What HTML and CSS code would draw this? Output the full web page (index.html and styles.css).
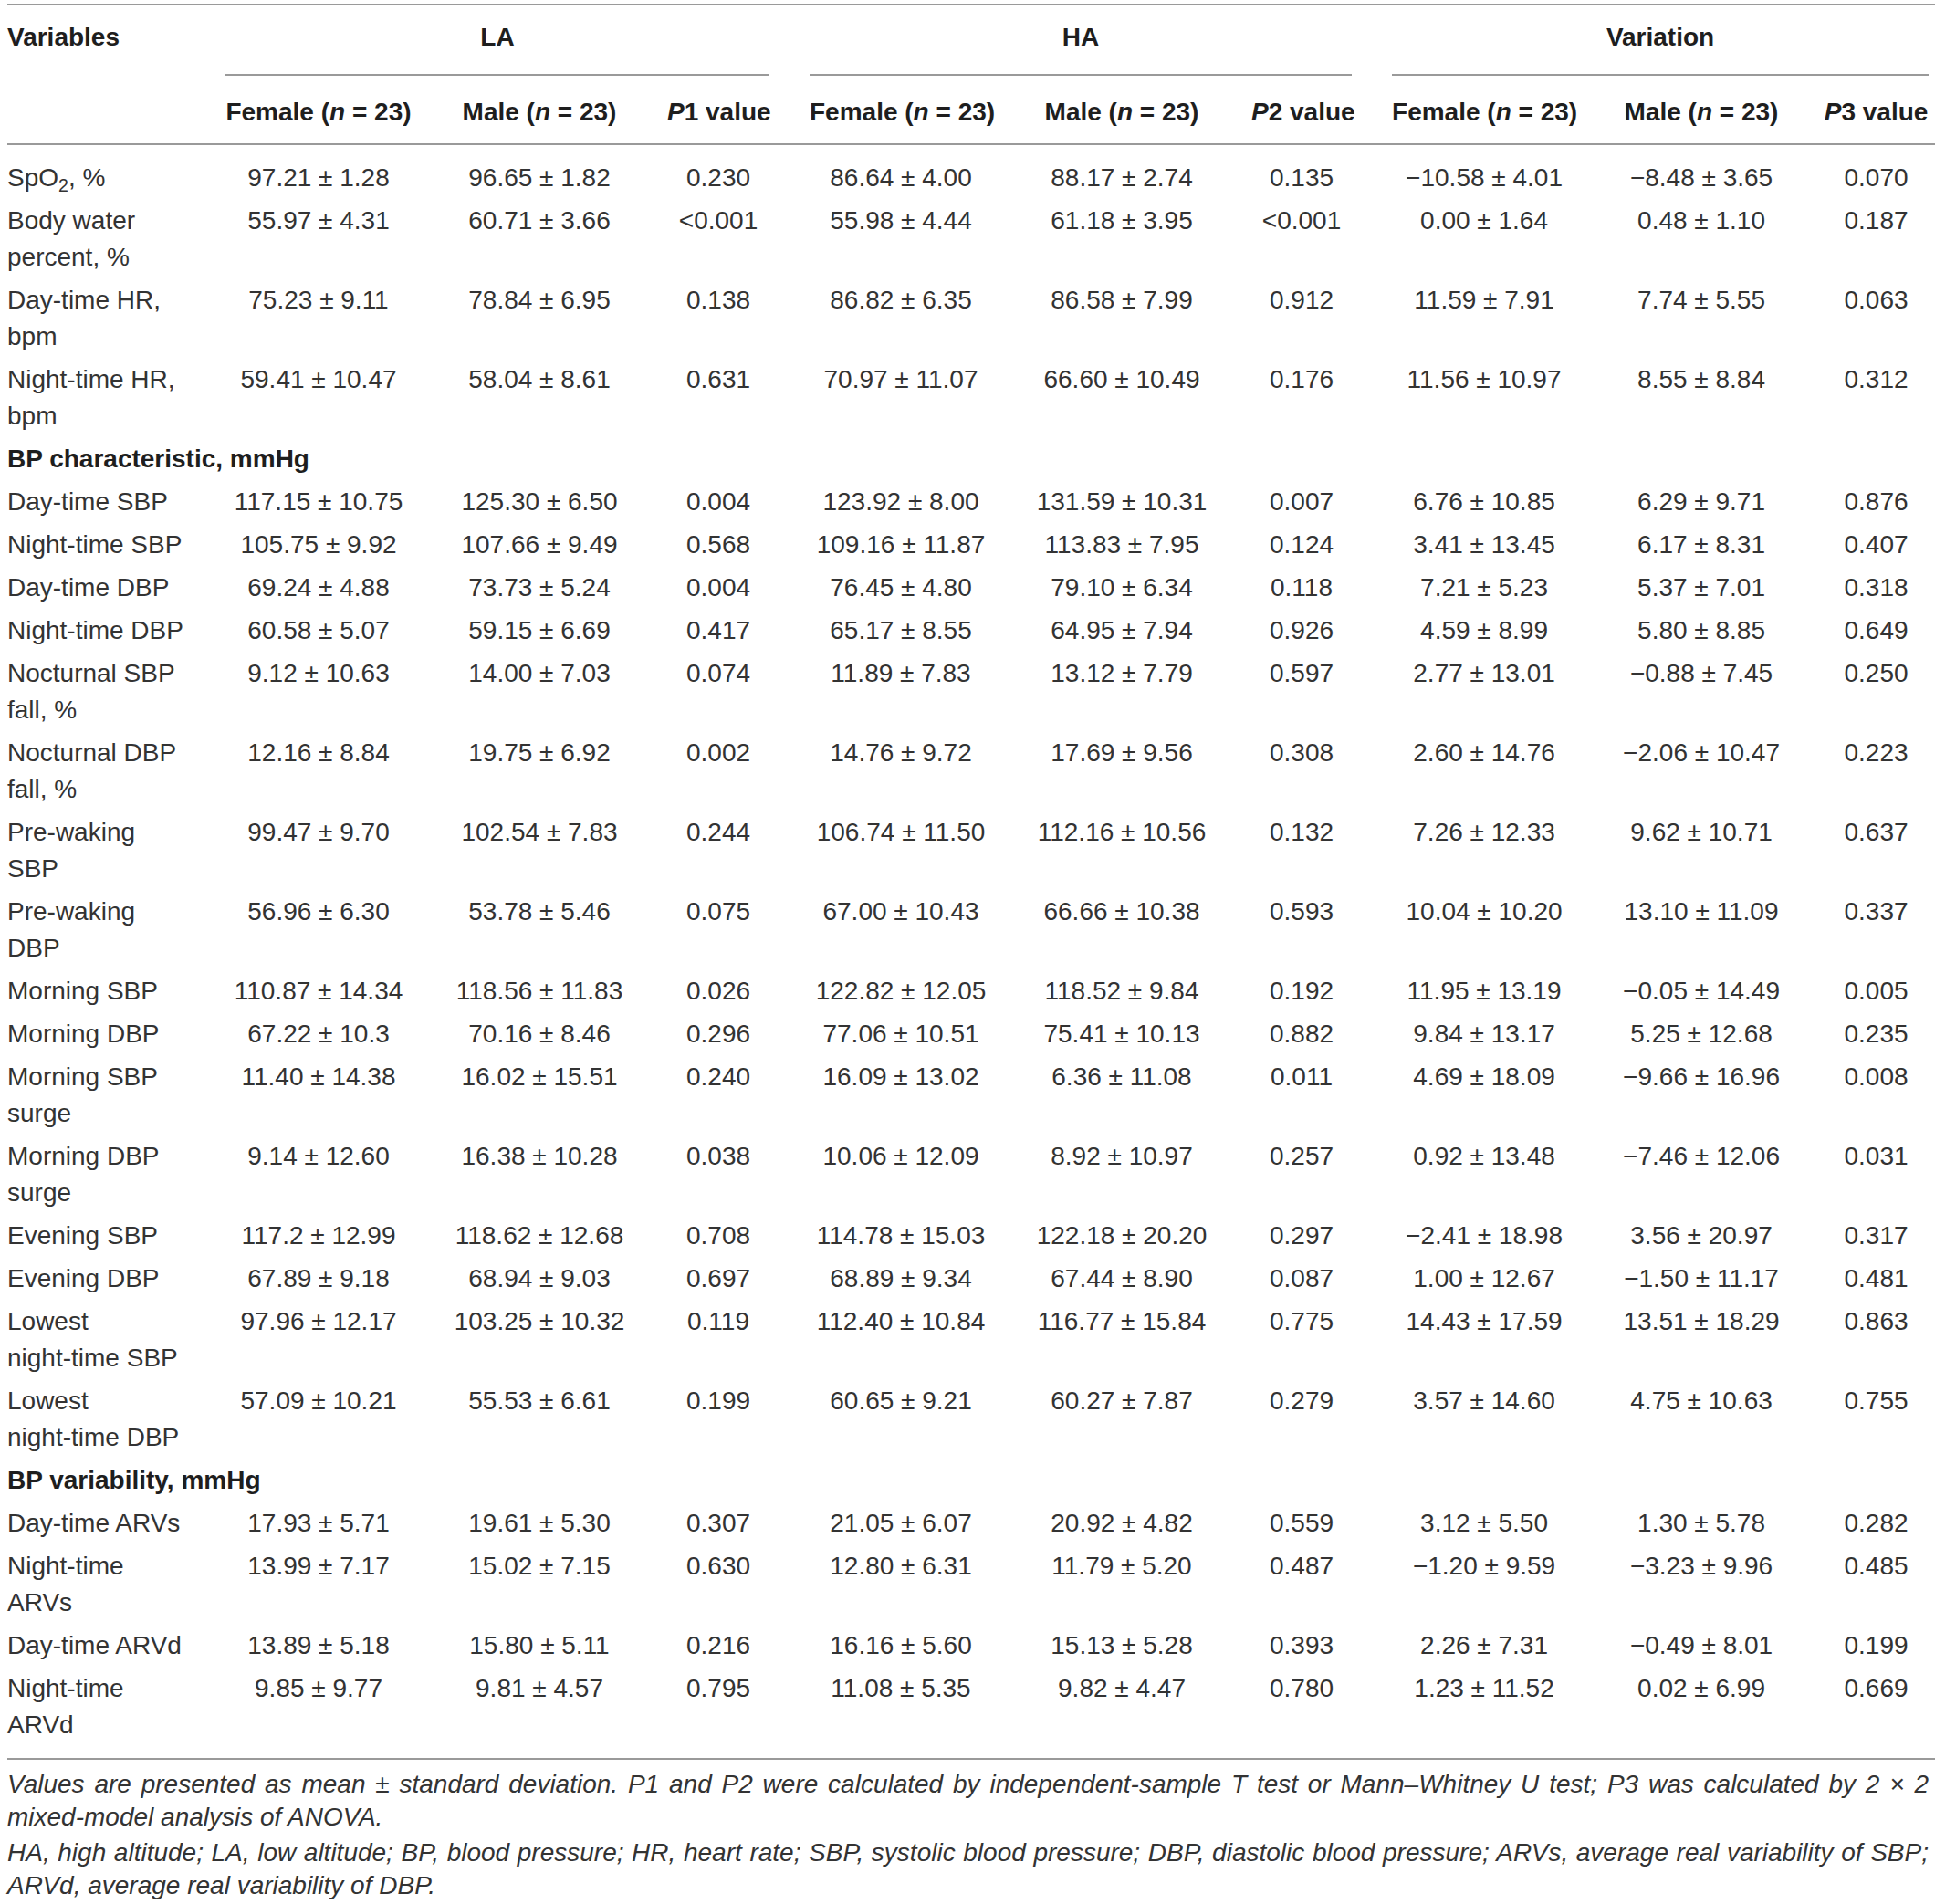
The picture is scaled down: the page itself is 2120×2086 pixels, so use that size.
FILE: index.html
```html
<!DOCTYPE html>
<html lang="en">
<head>
  <meta charset="UTF-8" />
  <title>BP characteristics by sex at LA and HA</title>
  <link rel="stylesheet" href="styles.css">
</head>
<body>

<table class="data">
  <colgroup>
    <col class="c-var">
    <col class="c-f1"><col class="c-m1"><col class="c-p1">
    <col class="c-f2"><col class="c-m2"><col class="c-p2">
    <col class="c-f3"><col class="c-m3"><col class="c-p3">
  </colgroup>
  <thead>
    <tr class="head-top">
      <th rowspan="2" class="var-head">Variables</th>
      <th colspan="3" class="group"><div>LA</div></th>
      <th colspan="3" class="group"><div>HA</div></th>
      <th colspan="3" class="group group-last"><div>Variation</div></th>
    </tr>
    <tr class="head-sub">
      <th>Female (<i>n</i> = 23)</th>
      <th>Male (<i>n</i> = 23)</th>
      <th><i>P</i>1 value</th>
      <th>Female (<i>n</i> = 23)</th>
      <th>Male (<i>n</i> = 23)</th>
      <th><i>P</i>2 value</th>
      <th>Female (<i>n</i> = 23)</th>
      <th>Male (<i>n</i> = 23)</th>
      <th class="last"><i>P</i>3 value</th>
    </tr>
  </thead>
  <tbody>
    <tr><td>SpO<sub>2</sub>, %</td><td>97.21 ± 1.28</td><td>96.65 ± 1.82</td><td>0.230</td><td>86.64 ± 4.00</td><td>88.17 ± 2.74</td><td>0.135</td><td>−10.58 ± 4.01</td><td>−8.48 ± 3.65</td><td>0.070</td></tr>
    <tr><td>Body water percent, %</td><td>55.97 ± 4.31</td><td>60.71 ± 3.66</td><td>&lt;0.001</td><td>55.98 ± 4.44</td><td>61.18 ± 3.95</td><td>&lt;0.001</td><td>0.00 ± 1.64</td><td>0.48 ± 1.10</td><td>0.187</td></tr>
    <tr><td>Day-time HR, bpm</td><td>75.23 ± 9.11</td><td>78.84 ± 6.95</td><td>0.138</td><td>86.82 ± 6.35</td><td>86.58 ± 7.99</td><td>0.912</td><td>11.59 ± 7.91</td><td>7.74 ± 5.55</td><td>0.063</td></tr>
    <tr><td>Night-time HR, bpm</td><td>59.41 ± 10.47</td><td>58.04 ± 8.61</td><td>0.631</td><td>70.97 ± 11.07</td><td>66.60 ± 10.49</td><td>0.176</td><td>11.56 ± 10.97</td><td>8.55 ± 8.84</td><td>0.312</td></tr>
    <tr class="section"><td colspan="10">BP characteristic, mmHg</td></tr>
    <tr><td>Day-time SBP</td><td>117.15 ± 10.75</td><td>125.30 ± 6.50</td><td>0.004</td><td>123.92 ± 8.00</td><td>131.59 ± 10.31</td><td>0.007</td><td>6.76 ± 10.85</td><td>6.29 ± 9.71</td><td>0.876</td></tr>
    <tr><td>Night-time SBP</td><td>105.75 ± 9.92</td><td>107.66 ± 9.49</td><td>0.568</td><td>109.16 ± 11.87</td><td>113.83 ± 7.95</td><td>0.124</td><td>3.41 ± 13.45</td><td>6.17 ± 8.31</td><td>0.407</td></tr>
    <tr><td>Day-time DBP</td><td>69.24 ± 4.88</td><td>73.73 ± 5.24</td><td>0.004</td><td>76.45 ± 4.80</td><td>79.10 ± 6.34</td><td>0.118</td><td>7.21 ± 5.23</td><td>5.37 ± 7.01</td><td>0.318</td></tr>
    <tr><td>Night-time DBP</td><td>60.58 ± 5.07</td><td>59.15 ± 6.69</td><td>0.417</td><td>65.17 ± 8.55</td><td>64.95 ± 7.94</td><td>0.926</td><td>4.59 ± 8.99</td><td>5.80 ± 8.85</td><td>0.649</td></tr>
    <tr><td>Nocturnal SBP fall, %</td><td>9.12 ± 10.63</td><td>14.00 ± 7.03</td><td>0.074</td><td>11.89 ± 7.83</td><td>13.12 ± 7.79</td><td>0.597</td><td>2.77 ± 13.01</td><td>−0.88 ± 7.45</td><td>0.250</td></tr>
    <tr><td>Nocturnal DBP fall, %</td><td>12.16 ± 8.84</td><td>19.75 ± 6.92</td><td>0.002</td><td>14.76 ± 9.72</td><td>17.69 ± 9.56</td><td>0.308</td><td>2.60 ± 14.76</td><td>−2.06 ± 10.47</td><td>0.223</td></tr>
    <tr><td>Pre-waking SBP</td><td>99.47 ± 9.70</td><td>102.54 ± 7.83</td><td>0.244</td><td>106.74 ± 11.50</td><td>112.16 ± 10.56</td><td>0.132</td><td>7.26 ± 12.33</td><td>9.62 ± 10.71</td><td>0.637</td></tr>
    <tr><td>Pre-waking DBP</td><td>56.96 ± 6.30</td><td>53.78 ± 5.46</td><td>0.075</td><td>67.00 ± 10.43</td><td>66.66 ± 10.38</td><td>0.593</td><td>10.04 ± 10.20</td><td>13.10 ± 11.09</td><td>0.337</td></tr>
    <tr><td>Morning SBP</td><td>110.87 ± 14.34</td><td>118.56 ± 11.83</td><td>0.026</td><td>122.82 ± 12.05</td><td>118.52 ± 9.84</td><td>0.192</td><td>11.95 ± 13.19</td><td>−0.05 ± 14.49</td><td>0.005</td></tr>
    <tr><td>Morning DBP</td><td>67.22 ± 10.3</td><td>70.16 ± 8.46</td><td>0.296</td><td>77.06 ± 10.51</td><td>75.41 ± 10.13</td><td>0.882</td><td>9.84 ± 13.17</td><td>5.25 ± 12.68</td><td>0.235</td></tr>
    <tr><td>Morning SBP surge</td><td>11.40 ± 14.38</td><td>16.02 ± 15.51</td><td>0.240</td><td>16.09 ± 13.02</td><td>6.36 ± 11.08</td><td>0.011</td><td>4.69 ± 18.09</td><td>−9.66 ± 16.96</td><td>0.008</td></tr>
    <tr><td>Morning DBP surge</td><td>9.14 ± 12.60</td><td>16.38 ± 10.28</td><td>0.038</td><td>10.06 ± 12.09</td><td>8.92 ± 10.97</td><td>0.257</td><td>0.92 ± 13.48</td><td>−7.46 ± 12.06</td><td>0.031</td></tr>
    <tr><td>Evening SBP</td><td>117.2 ± 12.99</td><td>118.62 ± 12.68</td><td>0.708</td><td>114.78 ± 15.03</td><td>122.18 ± 20.20</td><td>0.297</td><td>−2.41 ± 18.98</td><td>3.56 ± 20.97</td><td>0.317</td></tr>
    <tr><td>Evening DBP</td><td>67.89 ± 9.18</td><td>68.94 ± 9.03</td><td>0.697</td><td>68.89 ± 9.34</td><td>67.44 ± 8.90</td><td>0.087</td><td>1.00 ± 12.67</td><td>−1.50 ± 11.17</td><td>0.481</td></tr>
    <tr><td>Lowest <span class="nw">night-time</span> SBP</td><td>97.96 ± 12.17</td><td>103.25 ± 10.32</td><td>0.119</td><td>112.40 ± 10.84</td><td>116.77 ± 15.84</td><td>0.775</td><td>14.43 ± 17.59</td><td>13.51 ± 18.29</td><td>0.863</td></tr>
    <tr><td>Lowest <span class="nw">night-time</span> DBP</td><td>57.09 ± 10.21</td><td>55.53 ± 6.61</td><td>0.199</td><td>60.65 ± 9.21</td><td>60.27 ± 7.87</td><td>0.279</td><td>3.57 ± 14.60</td><td>4.75 ± 10.63</td><td>0.755</td></tr>
    <tr class="section"><td colspan="10">BP variability, mmHg</td></tr>
    <tr><td>Day-time ARVs</td><td>17.93 ± 5.71</td><td>19.61 ± 5.30</td><td>0.307</td><td>21.05 ± 6.07</td><td>20.92 ± 4.82</td><td>0.559</td><td>3.12 ± 5.50</td><td>1.30 ± 5.78</td><td>0.282</td></tr>
    <tr><td><span class="nw">Night-time</span> ARVs</td><td>13.99 ± 7.17</td><td>15.02 ± 7.15</td><td>0.630</td><td>12.80 ± 6.31</td><td>11.79 ± 5.20</td><td>0.487</td><td>−1.20 ± 9.59</td><td>−3.23 ± 9.96</td><td>0.485</td></tr>
    <tr><td>Day-time ARVd</td><td>13.89 ± 5.18</td><td>15.80 ± 5.11</td><td>0.216</td><td>16.16 ± 5.60</td><td>15.13 ± 5.28</td><td>0.393</td><td>2.26 ± 7.31</td><td>−0.49 ± 8.01</td><td>0.199</td></tr>
    <tr><td><span class="nw">Night-time</span> ARVd</td><td>9.85 ± 9.77</td><td>9.81 ± 4.57</td><td>0.795</td><td>11.08 ± 5.35</td><td>9.82 ± 4.47</td><td>0.780</td><td>1.23 ± 11.52</td><td>0.02 ± 6.99</td><td>0.669</td></tr>
  </tbody>
</table>

<div class="notes">
  <p>Values are presented as mean ± standard deviation. P1 and P2 were calculated by independent-sample T test or Mann–Whitney U test; P3 was calculated by 2 × 2 <span class="nw">mixed-model</span> analysis of ANOVA.</p>
  <p>HA, high altitude; LA, low altitude; BP, blood pressure; HR, heart rate; SBP, systolic blood pressure; DBP, diastolic blood pressure; ARVs, average real variability of SBP; ARVd, average real variability of DBP.</p>
</div>

</body>
</html>
```

FILE: styles.css
```css
html { overflow: hidden; background: #fff; }
body {
  margin: 0; padding: 4px 0 0 8px;
  font-family: "Liberation Sans", Arial, sans-serif; font-size: 28px; color: #333;
}

/* table */
.data {
  width: 2112px; table-layout: fixed;
  border-collapse: separate; border-spacing: 0;
  border-top: 2px solid #9a9a9a; border-bottom: 2px solid #9a9a9a;
}
.c-var { width: 217px; }
.c-f1 { width: 248px; } .c-m1 { width: 236px; } .c-p1 { width: 156px; }
.c-f2 { width: 244px; } .c-m2 { width: 240px; } .c-p2 { width: 154px; }
.c-f3 { width: 246px; } .c-m3 { width: 230px; } .c-p3 { width: 141px; }

th, td {
  padding: 3.5px 22px; line-height: 40px;
  text-align: center; vertical-align: top; white-space: nowrap;
}
th { font-weight: bold; color: #1e1e1e; }
i { font-style: italic; }
sub { font-size: 0.7em; line-height: 0; vertical-align: -0.3em; }
.nw { white-space: nowrap; }

/* header */
.var-head { text-align: left; padding: 15px 22px 14px 0; border-bottom: 2px solid #9a9a9a; }
.group { padding: 15px 22px 0; }
.group div { padding-bottom: 20px; border-bottom: 2px solid #9a9a9a; }
.group-last { padding-right: 7px; }
.head-sub th { padding: 20px 22px 14px; border-bottom: 2px solid #9a9a9a; }
.head-sub th.last { padding: 20px 6px 14px 18px; }

/* body */
tbody td:first-child { text-align: left; padding-left: 0; white-space: normal; }
tbody td:last-child { padding-left: 18px; padding-right: 6px; }
tbody tr:first-child td { padding-top: 15.5px; }
tbody tr:last-child td { padding-bottom: 16.5px; }
tbody tr.section td {
  padding-left: 0; padding-right: 0; text-align: left;
  font-weight: bold; color: #1e1e1e; white-space: nowrap;
}

/* footnote */
.notes {
  width: 2105px; margin-top: 9px;
  font-size: 28px; line-height: 36px; font-style: italic; text-align: justify;
}
.notes p { margin: 0 0 3px; }
```
